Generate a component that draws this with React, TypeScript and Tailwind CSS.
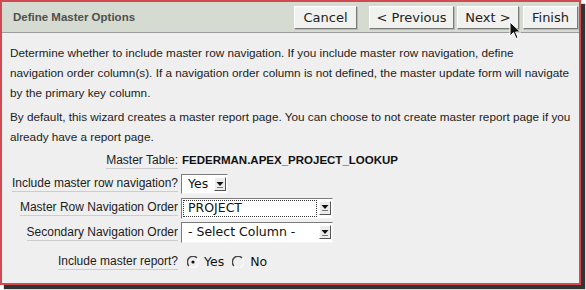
import React from "react";

const SANS = "font-['Liberation_Sans',Arial,sans-serif]";
const DV = "font-['DejaVu_Sans',sans-serif]";

function Btn({ children, w, ml }: { children: React.ReactNode; w: string; ml: string }) {
  return (
    <div
      className={`${w} ${ml} h-[23px] flex items-center justify-center bg-[#f1f1ef] border border-t-white border-l-white border-b-[#7a7a7a] border-r-[#7a7a7a] shadow-[1px_1px_0_#b9b9b9] text-[13px] text-[#222] ${DV}`}
    >
      {children}
    </div>
  );
}

function Arrow() {
  return (
    <div className="w-[12px] h-[14px] mt-[2px] bg-[#ececec] border border-t-white border-l-white border-b-[#555] border-r-[#555] flex items-center justify-center">
      <svg width="8" height="7" viewBox="0 0 8 7">
        <path d="M0.5 1 L7.5 1 L4 5 Z" fill="#111" />
        <rect x="1" y="6" width="6" height="1" fill="#777" />
      </svg>
    </div>
  );
}

function Select({ w, h, text, focus }: { w: string; h: string; text: string; focus?: boolean }) {
  return (
    <div className={`${w} ${h} flex border border-t-[#7b7b7b] border-l-[#7b7b7b] border-b-[#f4f4f4] border-r-[#f4f4f4] bg-white`}>
      <div className="flex-1 flex p-[1px]">
        <div
          className={`flex-1 flex items-center pl-[4px] text-[12.5px] text-[#111] whitespace-nowrap ${DV} ${
            focus ? "border border-dotted border-[#333]" : "border border-transparent"
          }`}
        >
          {text}
        </div>
      </div>
      <div className="w-[14px] flex justify-center">
        <Arrow />
      </div>
    </div>
  );
}

function Radio({ checked }: { checked?: boolean }) {
  return (
    <svg width="12" height="12" viewBox="0 0 12 12">
      <path d="M10 2 A5.5 5.5 0 0 0 2 10" stroke="#444" strokeWidth="1.5" fill="none" />
      <path d="M2 10 A5.5 5.5 0 0 0 10 2" stroke="#fafafa" strokeWidth="1.2" fill="none" />
      {checked && <circle cx="6" cy="6" r="1.6" fill="#111" />}
    </svg>
  );
}

function Label({ children }: { children: React.ReactNode }) {
  return (
    <div className="w-[168px] shrink-0 flex justify-end text-[12px]">
      <span className="border-b border-[#cdcdcd] leading-[14px] pb-[1px] whitespace-nowrap">{children}</span>
    </div>
  );
}

export default function App() {
  return (
    <div className="w-[586px] h-[290px] bg-white relative overflow-hidden">
      <div className="w-[581px] h-[285px] border-2 border-[#d24a50] shadow-[4px_4px_1px_#333] bg-[#efefef] flex flex-col">
        <div className="h-[31px] shrink-0 bg-[#d5dbd0] border-b border-[#9c9c9c] flex items-center pl-[11px] pr-[1px]">
          <div className={`font-bold text-[11.5px] text-[#4f4f4f] mt-[2px] ${SANS}`}>Define Master Options</div>
          <div className="ml-auto flex items-center pt-[1px]">
            <Btn w="w-[63px]" ml="ml-0">Cancel</Btn>
            <Btn w="w-[85px]" ml="ml-[12px]">&lt; Previous</Btn>
            <Btn w="w-[62px]" ml="ml-[3px]">Next &gt;</Btn>
            <Btn w="w-[55px]" ml="ml-[4px]">Finish</Btn>
          </div>
        </div>
        <div className={`pl-[8px] pt-[10px] text-[11.75px] text-[#1c1c1c] ${SANS}`}>
          <p className="leading-[20px] whitespace-nowrap">
            Determine whether to include master row navigation. If you include master row navigation, define
            <br />
            navigation order column(s). If a navigation order column is not defined, the master update form will navigate
            <br />
            by the primary key column.
          </p>
          <p className="leading-[20px] mt-[4px] whitespace-nowrap">
            By default, this wizard creates a master report page. You can choose to not create master report page if you
            <br />
            already have a report page.
          </p>
          <div className="mt-[2px] flex flex-col">
            <div className="h-[23px] flex items-center">
              <Label>Master Table:</Label>
              <span className="ml-[4px] font-bold text-[11.5px] text-[#111]">FEDERMAN.APEX_PROJECT_LOOKUP</span>
            </div>
            <div className="h-[24px] flex items-center">
              <Label>Include master row navigation?</Label>
              <div className="ml-[3px]">
                <Select w="w-[47px]" h="h-[20px]" text="Yes" />
              </div>
            </div>
            <div className="h-[24px] flex items-center">
              <Label>Master Row Navigation Order</Label>
              <div className="ml-[3px]">
                <Select w="w-[152px]" h="h-[21px]" text="PROJECT" focus />
              </div>
            </div>
            <div className="h-[25px] flex items-center">
              <Label>Secondary Navigation Order</Label>
              <div className="ml-[3px]">
                <Select w="w-[152px]" h="h-[21px]" text="- Select Column -" />
              </div>
            </div>
            <div className="h-[24px] mt-[5px] flex items-center">
              <Label>Include master report?</Label>
              <div className={`ml-[9px] flex items-center text-[12.5px] text-[#111] ${DV}`}>
                <Radio checked />
                <span className="ml-[5px]">Yes</span>
                <span className="ml-[8px] flex items-center">
                  <Radio />
                </span>
                <span className="ml-[6px]">No</span>
              </div>
            </div>
          </div>
        </div>
      </div>
      <svg className="absolute left-[509px] top-[21px]" width="13" height="19" viewBox="0 0 13 19">
        <path d="M1 1 L1 15 L4.5 11.5 L7 17.5 L9 16.6 L6.6 11 L11.5 11 Z" fill="#111" stroke="#fff" strokeWidth="1" strokeLinejoin="round" />
      </svg>
    </div>
  );
}
